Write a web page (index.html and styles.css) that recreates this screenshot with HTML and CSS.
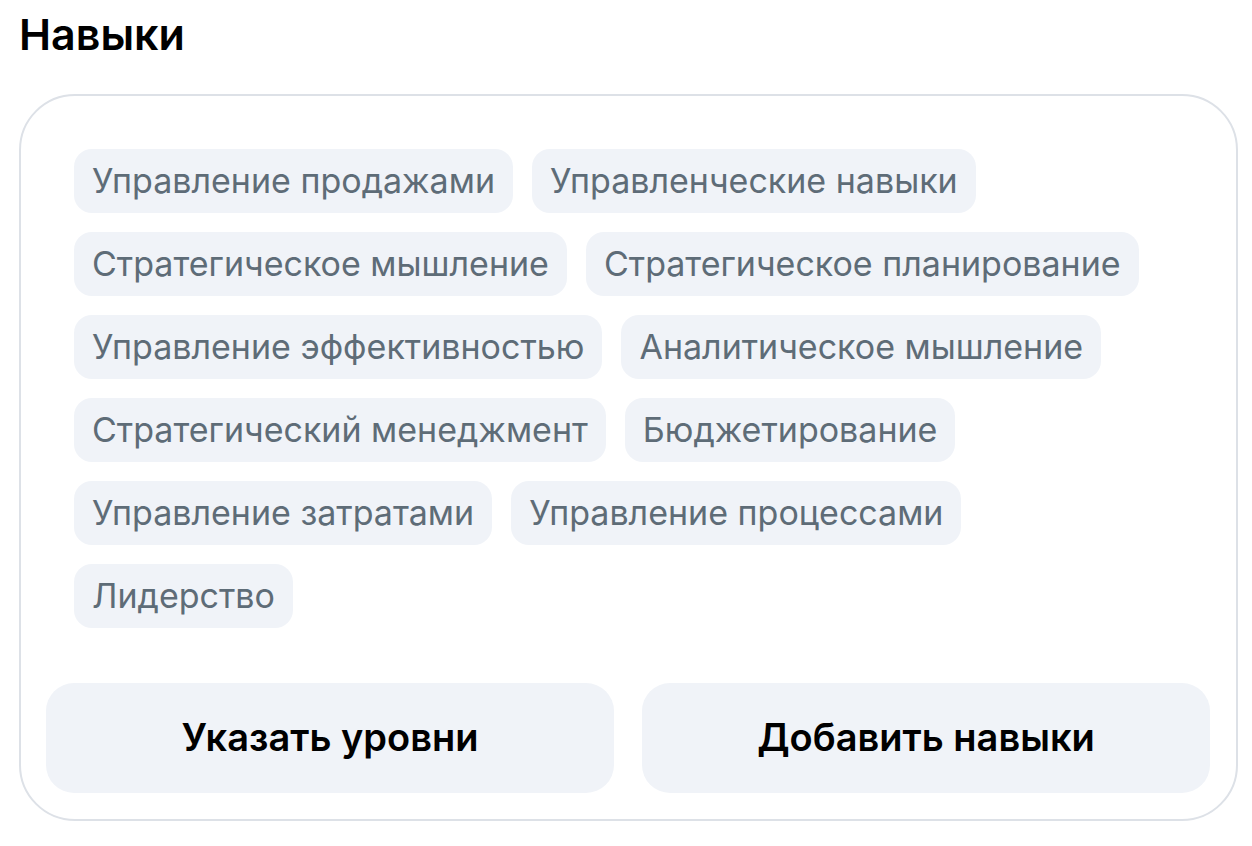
FILE: index.html
```html
<!DOCTYPE html>
<html lang="ru">
<head>
<meta charset="utf-8">
<meta name="viewport" content="width=device-width, initial-scale=1">
<title>Навыки</title>
<link rel="stylesheet" href="styles.css">
</head>
<body>
<main class="page">
  <h1 class="title">Навыки</h1>
  <section class="card">
    <ul class="skills">
      <li class="skill">Управление продажами</li>
      <li class="skill">Управленческие навыки</li>
      <li class="skill">Стратегическое мышление</li>
      <li class="skill">Стратегическое планирование</li>
      <li class="skill">Управление эффективностью</li>
      <li class="skill">Аналитическое мышление</li>
      <li class="skill">Стратегический менеджмент</li>
      <li class="skill">Бюджетирование</li>
      <li class="skill">Управление затратами</li>
      <li class="skill">Управление процессами</li>
      <li class="skill">Лидерство</li>
    </ul>
    <div class="actions">
      <button class="action" type="button">Указать уровни</button>
      <button class="action" type="button">Добавить навыки</button>
    </div>
  </section>
</main>
</body>
</html>
```

FILE: styles.css
```css
* {
  box-sizing: border-box;
}

body {
  margin: 0;
  background: #fff;
  color: #000;
  font-family: Inter, "Liberation Sans", sans-serif;
}

.page {
  padding: 8px 14px 24px 19px;
}

.title {
  margin: 0 0 34px;
  font-size: 43px;
  line-height: 52px;
  font-weight: 600;
}

.card {
  padding: 53px 26px 26px 25px;
  border: 2px solid #dde1e7;
  border-radius: 56px;
}

.skills {
  display: flex;
  flex-wrap: wrap;
  gap: 19px;
  margin: 0 28px 55px;
  padding: 0;
  list-style: none;
}

.skill {
  padding: 10px 18px;
  border-radius: 18px;
  background: #f0f3f8;
  color: #5e6c77;
  font-size: 34px;
  line-height: 44px;
}

.actions {
  display: grid;
  grid-template-columns: 1fr 1fr;
  gap: 28px;
}

.action {
  padding: 29px 16px 31px;
  border: 0;
  border-radius: 28px;
  background: #f0f3f8;
  color: #000;
  font: inherit;
  font-size: 38px;
  font-weight: 600;
  line-height: 50px;
}
```
